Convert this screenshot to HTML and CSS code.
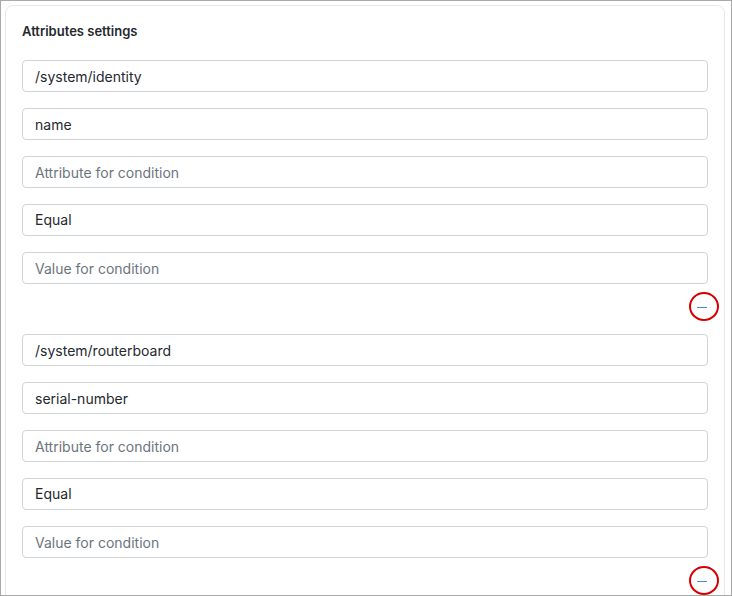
FILE: index.html
```html
<!DOCTYPE html>
<html lang="en">
<head>
<meta charset="utf-8">
<title>Attributes settings</title>
<link rel="stylesheet" href="styles.css">
</head>
<body>
<main class="frame">
  <form class="card">
    <h2 class="title">Attributes settings</h2>
    <fieldset class="group">
      <input class="field" type="text" aria-label="Path" value="/system/identity">
      <input class="field" type="text" aria-label="Attribute" value="name">
      <input class="field" type="text" aria-label="Attribute for condition" placeholder="Attribute for condition">
      <select class="field" aria-label="Condition"><option>Equal</option></select>
      <input class="field" type="text" aria-label="Value for condition" placeholder="Value for condition">
      <button class="remove" type="button" aria-label="Remove">
        <svg class="ring" viewBox="0 0 30 29" aria-hidden="true"><ellipse cx="15" cy="14.5" rx="14" ry="13.5"/><path d="M8 15.5h10"/></svg>
      </button>
    </fieldset>
    <fieldset class="group">
      <input class="field" type="text" aria-label="Path" value="/system/routerboard">
      <input class="field" type="text" aria-label="Attribute" value="serial-number">
      <input class="field" type="text" aria-label="Attribute for condition" placeholder="Attribute for condition">
      <select class="field" aria-label="Condition"><option>Equal</option></select>
      <input class="field" type="text" aria-label="Value for condition" placeholder="Value for condition">
      <button class="remove" type="button" aria-label="Remove">
        <svg class="ring" viewBox="0 0 30 29" aria-hidden="true"><ellipse cx="15" cy="14.5" rx="14" ry="13.5"/><path d="M8 15.5h10"/></svg>
      </button>
    </fieldset>
  </form>
</main>
</body>
</html>
```
FILE: styles.css
```css
* {
  box-sizing: border-box;
}

body {
  margin: 0;
  background: #fff;
  color: #24292e;
  font-family: Inter, "Liberation Sans", sans-serif;
}

.frame {
  height: 100vh;
  overflow: hidden;
  padding: 4px 6px 0 4px;
  border: 1px solid #a9a9a9;
}

.card {
  padding: 16px;
  border: 1px solid #e6e8ec;
  border-radius: 8px;
}

.title {
  margin: 0 0 20px;
  font-size: 13px;
  line-height: 18px;
  font-weight: 600;
  color: #24292e;
}

.group {
  display: flex;
  flex-direction: column;
  gap: 16px;
  min-width: 0;
  margin: 0 0 13px;
  padding: 0;
  border: 0;
}

.field {
  width: 100%;
  height: 32px;
  margin: 0;
  padding: 0 12px;
  border: 1px solid #ced4da;
  border-radius: 4px;
  background: #fff;
  color: #24292e;
  font: 14px/20px Inter, "Liberation Sans", sans-serif;
  appearance: none;
}

.field::placeholder {
  color: #6c757d;
  opacity: 1;
}

.remove {
  align-self: flex-end;
  width: 30px;
  height: 29px;
  margin: -8px -11px 0 0;
  padding: 0;
  border: 0;
  background: none;
}

.ring {
  display: block;
  width: 100%;
  height: 100%;
  fill: none;
}

.ring ellipse {
  stroke: #d60000;
  stroke-width: 2;
}

.ring path {
  stroke: #4a86e0;
  stroke-width: 1;
}
```
